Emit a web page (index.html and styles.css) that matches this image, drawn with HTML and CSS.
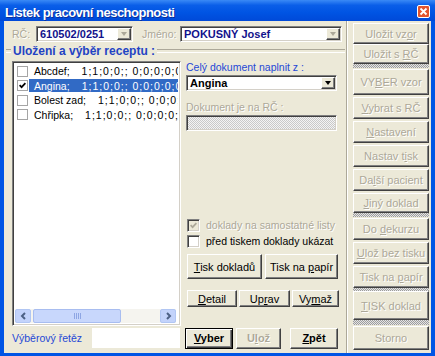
FILE: index.html
```html
<!DOCTYPE html>
<html>
<head>
  <meta charset="utf-8">
  <title>Lístek pracovní neschopnosti</title>
  <link rel="stylesheet" href="styles.css">
</head>
<body>
  <div class="window">
    <div class="titlebar">
      <span class="title">Lístek pracovní neschopnosti</span>
      <span class="close">
        <svg width="9" height="9" viewBox="0 0 9 9"><path d="M1.5 1.5 L7.5 7.5 M7.5 1.5 L1.5 7.5" stroke="#fff" stroke-width="1.8"/></svg>
      </span>
    </div>

    <div class="client">
      <div class="main">
        <div class="toprow">
          <span class="lbl dis lbl-rc">RČ:</span>
          <div class="field field-rc">
            <span class="val">610502/0251</span>
            <span class="drop"><i class="arrow dim"></i></span>
          </div>
          <span class="lbl dis lbl-jm">Jméno:</span>
          <div class="field field-jm">
            <span class="val">POKUSNÝ Josef</span>
            <span class="drop"><i class="arrow dim"></i></span>
          </div>
        </div>

        <div class="legend-row"><span class="legend">Uložení a výběr receptu :</span></div>

        <div class="body">
          <div class="listbox">
            <div class="items">
              <div class="item">
                <span class="cb"></span>
                <span class="hl"><span>Abcdef;</span><span class="data">1;1;0;0;; 0;0;0;0;0;0;</span></span>
              </div>
              <div class="item sel">
                <span class="cb"><svg width="7" height="7" viewBox="0 0 7 7"><path d="M0.6 3.2 L2.6 5.2 L6.4 1.2" fill="none" stroke="#000" stroke-width="1.7"/></svg></span>
                <span class="hl"><span>Angina;</span><span class="data">1;1;0;0;; 0;0;0;0;0;0;</span></span>
              </div>
              <div class="item">
                <span class="cb"></span>
                <span class="hl"><span>Bolest zad;</span><span class="data">1;1;0;0;; 0;0;0;0;0;0;</span></span>
              </div>
              <div class="item">
                <span class="cb"></span>
                <span class="hl"><span>Chřipka;</span><span class="data">1;1;0;0;; 0;0;0;0;0;0;</span></span>
              </div>
            </div>
            <div class="hscroll">
              <span class="sarrow"><svg width="7" height="8" viewBox="0 0 7 8"><path d="M5 1 L2 4 L5 7" fill="none" stroke="#4d6185" stroke-width="2"/></svg></span>
              <span class="thumb"><i></i><i></i><i></i><i></i></span>
              <span class="track"></span>
              <span class="sarrow"><svg width="7" height="8" viewBox="0 0 7 8"><path d="M2 1 L5 4 L2 7" fill="none" stroke="#4d6185" stroke-width="2"/></svg></span>
            </div>
          </div>

          <div class="panel">
            <div class="plabel blue">Celý dokument naplnit z :</div>
            <div class="field field-combo">
              <span class="val dark">Angina</span>
              <span class="drop"><i class="arrow"></i></span>
            </div>
            <div class="plabel plabel-gap dis">Dokument je na RČ :</div>
            <div class="field field-off"></div>

            <div class="check check-first dis">
              <span class="box box-off"><svg width="7" height="7" viewBox="0 0 7 7"><path d="M0.6 3.2 L2.6 5.2 L6.4 1.2" fill="none" stroke="#aca899" stroke-width="1.7"/></svg></span>
              <span>doklady na samostatné listy</span>
            </div>
            <div class="check">
              <span class="box"></span>
              <span>před tiskem doklady ukázat</span>
            </div>

            <div class="btnrow btnrow-print">
              <div class="btn w75"><span><u>T</u>isk dokladů</span></div>
              <div class="btn w73"><span>Tisk na <u>p</u>apír</span></div>
            </div>
            <div class="btnrow btnrow-edit">
              <div class="btn w50"><span><u>D</u>etail</span></div>
              <div class="btn w51"><span>Up<u>r</u>av</span></div>
              <div class="btn w47"><span>Vy<u>m</u>až</span></div>
            </div>
          </div>
        </div>

        <div class="bottomrow">
          <span class="lbl blue lbl-search">Výběrový řetěz</span>
          <span class="search"></span>
          <div class="btn default w48"><span><u>V</u>yber</span></div>
          <div class="btn bold dis w45"><span>U<u>l</u>ož</span></div>
          <div class="btn bold w48 zpet"><span><u>Z</u>pět</span></div>
        </div>
      </div>

      <div class="side">
        <div class="btn dis"><span>Uložit vz<u>o</u>r</span></div>
        <div class="btn dis h20 m0"><span>Uložit s <u>R</u>Č</span></div>
        <div class="band band4"></div>
        <div class="btn dis h26"><span>VY<u>B</u>ER vzor</span></div>
        <div class="btn dis"><span><u>V</u>ybrat s RČ</span></div>
        <div class="btn dis"><span><u>N</u>astavení</span></div>
        <div class="btn dis"><span>Nastav t<u>i</u>sk</span></div>
        <div class="btn dis"><span>Da<u>l</u>ší pacient</span></div>
        <div class="btn dis h20"><span><u>J</u>iný doklad</span></div>
        <div class="band band4"></div>
        <div class="btn dis"><span>Do <u>d</u>ekurzu</span></div>
        <div class="btn dis"><span><u>U</u>lož bez tisku</span></div>
        <div class="btn dis"><span>Tisk na <u>p</u>apír</span></div>
        <div class="band band3"></div>
        <div class="btn dis h29 m0"><span><u>T</u>ISK doklad</span></div>
        <div class="band band5"></div>
        <div class="btn dis h24"><span>Storno</span></div>
      </div>
    </div>
  </div>
</body>
</html>
```

FILE: styles.css
```css
* { box-sizing: border-box; }
body {
  margin: 0;
  font-family: "Liberation Sans", Arial, sans-serif;
  font-size: 10.5px;
  color: #000;
}
u { text-underline-offset: 1px; }

/* okno */
.window {
  width: 435px;
  height: 356px;
  display: flex;
  flex-direction: column;
  padding: 0 4px 3px;
  background: #0055e5;
}
.titlebar {
  flex: none;
  height: 21px;
  margin: 0 -4px;
  padding: 0 5px;
  display: flex;
  align-items: flex-start;
  justify-content: space-between;
  background: linear-gradient(#3a8af6, #0a5ee8 25%, #0054e3 60%, #0049d8);
}
.title {
  margin-top: 6px;
  line-height: 13px;
  color: #fff;
  font-size: 13px;
  font-weight: bold;
  letter-spacing: -0.5px;
  text-shadow: 1px 1px #0b2f9a;
}
.close {
  margin-top: 5px;
  width: 13px;
  height: 13px;
  display: flex;
  align-items: center;
  justify-content: center;
  border: 1px solid #fff;
  border-radius: 2px;
  background: #e2542d;
}

.client {
  flex: 1;
  min-height: 0;
  display: flex;
  background: #ece9d8;
}
.main {
  width: 342px;
  display: flex;
  flex-direction: column;
}

/* texty */
.dis { color: #aca899; text-shadow: 1px 1px #fff; }
.blue { color: #1f48d6; }
.lbl { white-space: nowrap; }
.lbl-rc { width: 24px; }
.lbl-jm { width: 38px; margin-left: 9px; }

/* pole */
.field {
  display: flex;
  align-items: stretch;
  height: 16px;
  padding: 1px;
  background: #fff;
  border: 1px solid;
  border-color: #7f7f7f #fff #fff #7f7f7f;
  box-shadow: inset 1px 1px #404040, inset -1px -1px #d4d0c8;
}
.field .val {
  flex: 1;
  padding-left: 2px;
  line-height: 12px;
  font-size: 11px;
  font-weight: bold;
  color: #12128c;
  white-space: nowrap;
  overflow: hidden;
}
.field .val.dark { color: #000; }
.drop {
  flex: none;
  width: 14px;
  display: flex;
  align-items: center;
  justify-content: center;
  background: #ece9d8;
  border: 1px solid;
  border-color: #fff #404040 #404040 #fff;
  box-shadow: inset -1px -1px #808080;
}
.arrow {
  width: 0;
  height: 0;
  border-left: 3.5px solid transparent;
  border-right: 3.5px solid transparent;
  border-top: 4px solid #000;
}
.arrow.dim { border-top-color: #aca899; }

.toprow {
  flex: none;
  display: flex;
  align-items: center;
  height: 16px;
  margin: 5px 0 0 8px;
}
.field-rc { width: 97px; }
.field-jm { width: 162px; }

.legend-row {
  flex: none;
  display: flex;
  align-items: center;
  height: 17px;
  margin: 0 1px 0 2px;
}
.legend-row::before,
.legend-row::after {
  content: "";
  height: 2px;
  border-top: 1px solid #aca899;
  border-bottom: 1px solid #fff;
}
.legend-row::before { width: 5px; }
.legend-row::after { flex: 1; }
.legend {
  padding: 0 2px;
  font-size: 12px;
  font-weight: bold;
  color: #2343c4;
}

/* seznam */
.body {
  flex: none;
  display: flex;
  height: 265px;
  margin-top: 2px;
}
.listbox {
  width: 169px;
  margin-left: 8px;
  display: flex;
  flex-direction: column;
  padding: 2px;
  background: #fff;
  border: 1px solid;
  border-color: #7f7f7f #fff #fff #7f7f7f;
  box-shadow: inset 1px 1px #404040, inset -1px -1px #d4d0c8;
}
.items { flex: 1; overflow: hidden; }
.item {
  display: flex;
  align-items: center;
  height: 14.5px;
  white-space: nowrap;
}
.cb {
  flex: none;
  width: 11px;
  height: 11px;
  margin: 0 1px 0 2px;
  display: flex;
  align-items: center;
  justify-content: center;
  border: 1px solid #a5a5a5;
  background: #fff;
}
.hl {
  flex: 1;
  display: flex;
  align-items: center;
  height: 13px;
  padding-left: 5px;
  overflow: hidden;
}
.sel .hl { background: #316ac5; color: #fff; }
.data { margin-left: 12px; letter-spacing: 1px; }

.hscroll {
  flex: none;
  display: flex;
  height: 14px;
  margin-right: 2px;
  background: #f5f4ef;
}
.sarrow {
  width: 16px;
  display: flex;
  align-items: center;
  justify-content: center;
  background: #c3d3fb;
  border: 1px solid #b1c6f3;
  border-radius: 2px;
}
.thumb {
  width: 88px;
  margin-left: 2px;
  display: flex;
  align-items: center;
  justify-content: center;
  gap: 1px;
  background: #c8d7fc;
  border: 1px solid #a8bdf0;
  border-radius: 2px;
}
.thumb i { width: 1px; height: 6px; background: #8ea6e4; }
.track { flex: 1; }

/* prostredni panel */
.panel {
  flex: 1;
  display: flex;
  flex-direction: column;
  padding-left: 5px;
}
.plabel { height: 13px; line-height: 13px; white-space: nowrap; }
.plabel-gap { margin-top: 10px; }
.field-combo { width: 151px; margin-top: 1px; }
.field-off {
  width: 151px;
  margin-top: 1px;
  background: repeating-conic-gradient(#c9c9c9 0 25%, #f4f4f4 0 50%) 0 0 / 2px 2px;
}
.check {
  display: flex;
  align-items: center;
  height: 16px;
  white-space: nowrap;
}
.check-first { margin-top: 86px; }
.box {
  flex: none;
  width: 13px;
  height: 13px;
  margin: 0 6px 0 1px;
  display: flex;
  align-items: center;
  justify-content: center;
  background: #fff;
  border: 1px solid;
  border-color: #808080 #fff #fff #808080;
  box-shadow: inset 1px 1px #404040, inset -1px -1px #d4d0c8;
  text-shadow: none;
}
.box-off { background: #ece9d8; }

/* tlacitka */
.btn {
  display: flex;
  align-items: center;
  justify-content: center;
  background: #ece9d8;
  border: 1px solid;
  border-color: #fff #404040 #404040 #fff;
  box-shadow: inset -1px -1px #808080;
  font-size: 11px;
  white-space: nowrap;
}
.btn.bold { font-weight: bold; }
.btn.default {
  border-color: #000;
  box-shadow: inset 1px 1px #fff, inset -1px -1px #404040, inset -2px -2px #808080;
  font-weight: bold;
}
.btnrow { display: flex; margin-left: 1px; }
.btnrow-print { height: 25px; margin-top: 5px; gap: 3px; }
.btnrow-edit { height: 17px; margin-top: 11px; gap: 2px; }
.w45 { width: 45px; }
.w47 { width: 47px; }
.w48 { width: 48px; }
.w50 { width: 50px; }
.w51 { width: 51px; }
.w73 { width: 73px; }
.w75 { width: 75px; }

.bottomrow {
  flex: none;
  display: flex;
  align-items: center;
  height: 22px;
  margin: 1px 0 0 8px;
}
.lbl-search { width: 80px; }
.search { width: 88px; height: 20px; background: #fff; }
.bottomrow .btn { height: 21px; margin-left: 3px; }
.bottomrow .default { margin-left: 5px; }
.bottomrow .zpet { margin-left: 9px; }

/* pravy sloupec */
.side {
  flex: 1;
  display: flex;
  flex-direction: column;
  padding: 2px 2px 0 6px;
  border-left: 1px solid #aca899;
  box-shadow: inset 1px 0 #fff;
}
.side .btn { flex: none; height: 22px; margin-top: 2px; }
.side .btn:first-child { height: 21px; margin-top: 0; }
.side .band + .btn { margin-top: 1px; }
.side .btn.h20 { height: 20px; }
.side .btn.h24 { height: 24px; }
.side .btn.h26 { height: 26px; }
.side .btn.h29 { height: 29px; }
.side .btn.m0 { margin-top: 0; }
.band {
  flex: none;
  background: repeating-conic-gradient(#9d9d9d 0 25%, #e4e4e4 0 50%) 0 0 / 2px 2px;
}
.band3 { height: 3px; }
.band4 { height: 4px; }
.band5 { height: 5px; }
```
